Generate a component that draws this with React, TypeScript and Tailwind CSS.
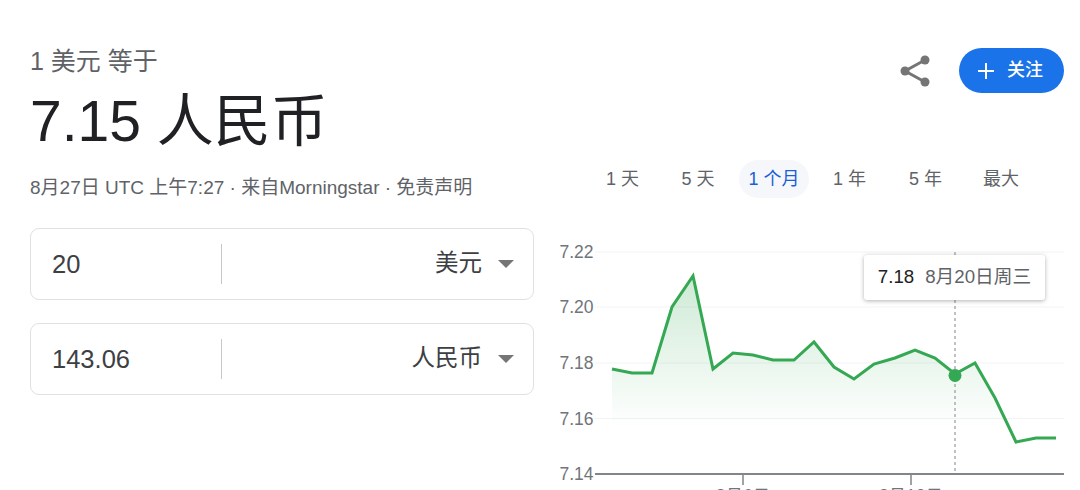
import React from "react";

const sans = "font-['Liberation_Sans','Noto_Sans_CJK_SC',sans-serif]";

const ranges = [
  { label: "1 天", width: "w-[69px]" },
  { label: "5 天", width: "w-[82px]" },
  { label: "1 个月", width: "w-[70px]", active: true },
  { label: "1 年", width: "w-[81px]" },
  { label: "5 年", width: "w-[71px]" },
  { label: "最大", width: "w-[80px]" },
];

const points =
  "57,129 77,133 97,133 117,67 138,36 158,129 178,113 198,115 218,120 239,120 259,102 279,127 299,139 319,124 340,118 360,110 380,118 400,134 420,123 440,158 461,202 481,198 501,198";

const grid = [
  { label: "7.22", y: 12 },
  { label: "7.20", y: 67 },
  { label: "7.18", y: 123 },
  { label: "7.16", y: 178.5 },
];

const CurrencyRow = ({ value, unit }: { value: string; unit: string }) => (
  <div className="flex h-[72px] items-center rounded-[9px] border-[1.5px] border-[#dfe1e5] bg-white">
    <div className="flex h-10 w-[191px] items-center border-r border-[#c4c7cb] pl-[21px] text-[25.5px] text-[#3c4043]">
      {value}
    </div>
    <div className="flex flex-1 items-center justify-end pr-[19px] text-[23.5px] text-[#3c4043]">
      {unit}
      <span className="ml-4 h-0 w-0 border-x-[8px] border-t-[8px] border-x-transparent border-t-[#757575]" />
    </div>
  </div>
);

const Chart = () => (
  <div className="relative h-[270px] w-[525px]">
    <svg width="525" height="270" viewBox="0 0 525 270" className="block">
      <defs>
        <linearGradient id="fill" x1="0" y1="0" x2="0" y2="1">
          <stop offset="0" stopColor="#34a853" stopOpacity="0.24" />
          <stop offset="0.92" stopColor="#34a853" stopOpacity="0" />
        </linearGradient>
      </defs>
      {grid.map((g) => (
        <g key={g.label}>
          <line x1="40" x2="509" y1={g.y} y2={g.y} stroke="#f1f3f4" strokeWidth="1" />
          <text x="4.5" y={g.y + 6} fontSize="17.5" fill="#70757a" fontFamily="Liberation Sans">
            {g.label}
          </text>
        </g>
      ))}
      <polygon points={`57,198 ${points} 501,198 57,198`} fill="url(#fill)" />
      <text x="4.5" y="240" fontSize="17.5" fill="#70757a" fontFamily="Liberation Sans">
        7.14
      </text>
      <line x1="400" x2="400" y1="12" y2="234" stroke="#80868b" strokeWidth="1" strokeDasharray="3 3" />
      <line x1="40" x2="509" y1="234" y2="234" stroke="#80868b" strokeWidth="2" />
      <line x1="188" x2="188" y1="234" y2="245" stroke="#80868b" strokeWidth="1.5" />
      <line x1="356" x2="356" y1="234" y2="245" stroke="#80868b" strokeWidth="1.5" />
      <polyline points={points} fill="none" stroke="#34a853" strokeWidth="3" strokeLinejoin="miter" />
      <circle cx="400" cy="135.5" r="6.5" fill="#34a853" />
      <text x="188" y="262" textAnchor="middle" fontSize="17.5" fill="#70757a" fontFamily="Liberation Sans, Noto Sans CJK SC">
        8月6日
      </text>
      <text x="356" y="262" textAnchor="middle" fontSize="17.5" fill="#70757a" fontFamily="Liberation Sans, Noto Sans CJK SC">
        8月13日
      </text>
    </svg>
    <div className="absolute left-[309px] top-[15px] flex h-[45px] w-[181px] items-center justify-center gap-[11px] rounded-[3px] bg-white text-[18.7px] shadow-[0_1px_4px_rgba(60,64,67,0.4)]">
      <span className="text-[#202124]">7.18</span>
      <span className="text-[#5f6368]">8月20日周三</span>
    </div>
  </div>
);

const App = () => {
  return (
    <div className={`flex h-[490px] w-[1080px] justify-between overflow-hidden bg-white ${sans}`}>
      <div className="ml-[30px] w-[504px] pt-[46px]">
        <p className="text-[25px] leading-[30px] text-[#5f6368]">1 美元 等于</p>
        <h1 className="mt-[14px] text-[57px] leading-[62px] text-[#202124]">7.15 人民币</h1>
        <p className="mt-[24px] text-[19px] leading-6 text-[#5f6368]">
          8月27日 UTC 上午7:27 · 来自Morningstar · 免责声明
        </p>
        <div className="mt-[28px] flex flex-col gap-[23px]">
          <CurrencyRow value="20" unit="美元" />
          <CurrencyRow value="143.06" unit="人民币" />
        </div>
      </div>

      <div className="w-[525px] pt-[48px]">
        <div className="flex h-[45px] items-center justify-end pr-4">
          <svg width="34" height="34" viewBox="0 0 34 34" className="mr-[27px]">
            <path d="M27 6 L7 17 L27 28" fill="none" stroke="#757575" strokeWidth="3" />
            <circle cx="27" cy="6" r="4.5" fill="#757575" />
            <circle cx="7" cy="17" r="4.5" fill="#757575" />
            <circle cx="27" cy="28" r="4.5" fill="#757575" />
          </svg>
          <button className="flex h-[45px] w-[105px] items-center justify-center gap-[12px] rounded-full bg-[#1a73e8] pr-[3px] text-[18px] font-medium text-white">
            <svg width="18" height="18" viewBox="0 0 18 18">
              <path d="M9 1 V17 M1 9 H17" stroke="#fff" strokeWidth="2" />
            </svg>
            关注
          </button>
        </div>
        <div className="ml-[33px] mt-[67px] flex items-center">
          {ranges.map((r) => (
            <div
              key={r.label}
              className={`flex h-[38px] items-center justify-center rounded-full text-[18px] ${r.width} ${
                r.active ? "bg-[#f5f7fa] text-[#1a5fd8]" : "text-[#5f6368]"
              }`}
            >
              {r.label}
            </div>
          ))}
        </div>
        <div className="mt-[42px]">
          <Chart />
        </div>
      </div>
    </div>
  );
};

export default App;
